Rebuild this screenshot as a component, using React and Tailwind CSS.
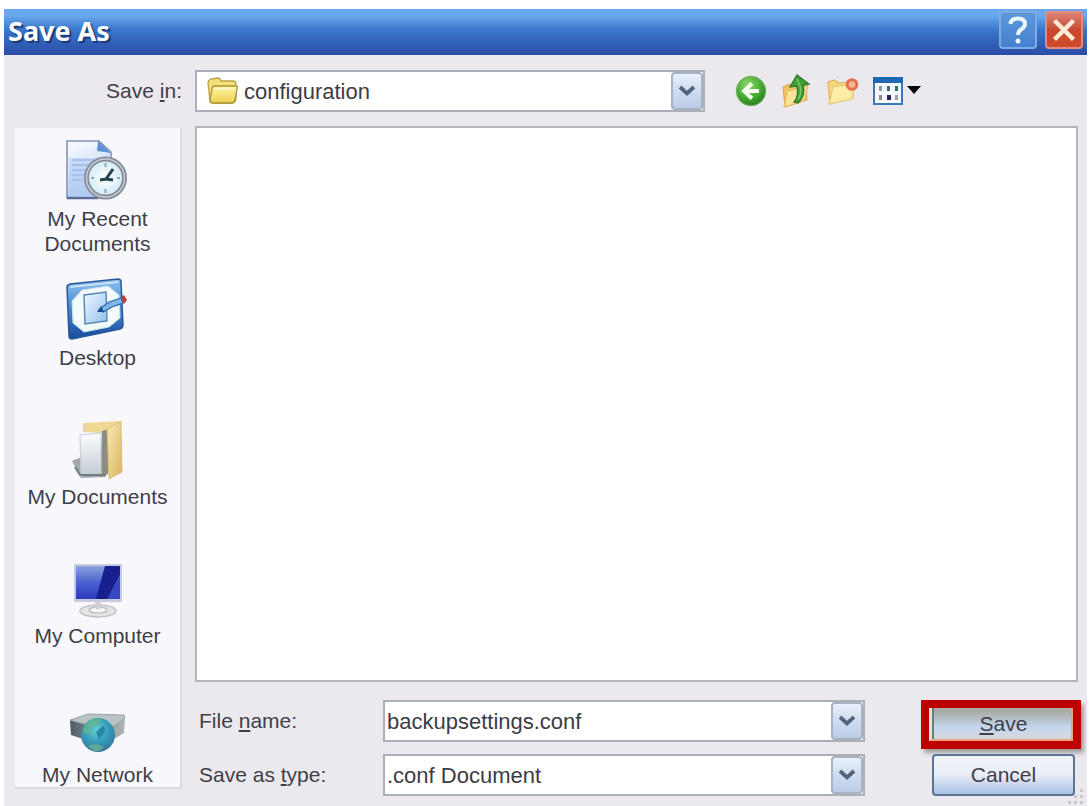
import React from "react";

function Chevron() {
  return (
    <svg viewBox="0 0 18 12" className="h-3 w-[18px]" aria-hidden="true">
      <path d="M2 2 L9 8.5 L16 2" fill="none" stroke="#55647c" strokeWidth="3.8" />
    </svg>
  );
}

const arrowBox =
  "flex w-8 items-center justify-center rounded-sm border-2 border-[#a9b2c0] bg-linear-to-b from-[#e9f0fa] via-[#cfdcf0] to-[#bccde8]";

function SelectField({ id, options, icon, className }) {
  return (
    <div className={"relative h-[42px] " + className}>
      <select
        id={id}
        className={
          "h-full w-full appearance-none border-2 border-[#adaeb8] bg-white text-[22px] text-[#3c3c44] outline-none " +
          (icon ? "pl-[47px]" : "pl-[2px]")
        }
      >
        {options.map((o) => (
          <option key={o}>{o}</option>
        ))}
      </select>
      {icon && <span className="pointer-events-none absolute top-[7px] left-3">{icon}</span>}
      <span className={"pointer-events-none absolute top-0.5 right-0.5 bottom-0.5 " + arrowBox}>
        <Chevron />
      </span>
    </div>
  );
}

function FolderIcon() {
  return (
    <svg viewBox="0 0 32 28" className="h-7 w-8" aria-hidden="true">
      <defs>
        <linearGradient id="fold" x1="0" y1="0" x2="0" y2="1">
          <stop offset="0" stopColor="#fff6a4" />
          <stop offset="1" stopColor="#ecd052" />
        </linearGradient>
      </defs>
      <path d="M3 24 L1 6 Q1 3 4 2 L11 1 Q13 1 14 4 L26 4 Q29 4 29 7 L29 22 Q28 26 25 26 L6 26 Q3 26 3 24Z" fill="#f3e07c" stroke="#b9a24a" strokeWidth="1.3" />
      <path d="M5 12 Q5 9 8 9 L29 9 Q31 9 30 12 L28 23 Q27 26 24 26 L6 26 Q3 26 3 22Z" fill="url(#fold)" stroke="#ae9436" strokeWidth="1.3" />
      <path d="M7 11.5 H28" stroke="#fffbd0" strokeWidth="1.6" />
    </svg>
  );
}

function BackIcon() {
  return (
    <svg viewBox="0 0 32 32" className="size-8" aria-hidden="true">
      <defs>
        <radialGradient id="green" cx=".4" cy=".3" r=".75">
          <stop offset="0" stopColor="#8fd96d" />
          <stop offset=".6" stopColor="#45a832" />
          <stop offset="1" stopColor="#287c1d" />
        </radialGradient>
      </defs>
      <circle cx="16" cy="16" r="14.7" fill="url(#green)" stroke="#6fae5c" strokeWidth="1" />
      <path d="M17 8.5 L9 16 L17 23.5 M10 16 H24" fill="none" stroke="#f6fff0" strokeWidth="3.8" />
    </svg>
  );
}

function UpIcon() {
  return (
    <svg viewBox="0 0 32 36" className="h-9 w-8" aria-hidden="true">
      <path d="M3 14 L9 11 L12 13 L26 9 L27 27 L5 34Z" fill="#f0c560" stroke="#d9a948" strokeWidth="1" />
      <path d="M7 18 L28 13 L24 28 L4 34Z" fill="#fbe29a" stroke="#e0b558" strokeWidth="1" />
      <path d="M14 29 Q19 24 17 13 L10 14 L17 2 L29 11 L23 12 Q26 23 18 30Z" fill="#3fa037" stroke="#2f7a2b" strokeWidth="1.3" />
      <path d="M17 6 L20 13 Q22 21 18 26" fill="none" stroke="#7cc768" strokeWidth="1.6" />
    </svg>
  );
}

function NewFolderIcon() {
  return (
    <svg viewBox="0 0 34 32" className="h-8 w-[34px]" aria-hidden="true">
      <path d="M3 7 L10 5 L13 8 L27 7 L28 22 L5 29Z" fill="#f5d67c" stroke="#dfb45a" strokeWidth="1.2" />
      <path d="M8 12 L30 9 L27 24 L4 29Z" fill="#fdeda6" stroke="#e8c973" strokeWidth="1.2" />
      <circle cx="27" cy="9.500" r="4.800" fill="#f3b795" stroke="#e5704e" strokeWidth="3" />
    </svg>
  );
}

function ViewsIcon() {
  return (
    <svg viewBox="0 0 50 30" className="h-[30px] w-[50px]" aria-hidden="true">
      <rect x="2" y="2" width="28" height="26" fill="#f7fafc" stroke="#3c78b4" strokeWidth="2" />
      <rect x="1" y="1" width="30" height="6" fill="#1f68b4" />
      <g fill="#4a6480">
        <rect x="7" y="10" width="3" height="5" fill="#8796a8" />
        <rect x="15" y="10" width="3" height="5" />
        <rect x="23" y="10" width="3" height="5" fill="#316f68" />
        <rect x="7" y="19" width="3" height="5" fill="#8b8690" />
        <rect x="15" y="19" width="4" height="5" fill="#33205a" />
        <rect x="23" y="19" width="3" height="5" fill="#9a9ca6" />
      </g>
      <path d="M35 10 H49 L42 18Z" fill="#050505" />
    </svg>
  );
}

function RecentIcon() {
  return (
    <svg viewBox="0 0 64 64" className="size-16" aria-hidden="true">
      <defs>
        <linearGradient id="page" x1="0" y1="0" x2=".3" y2="1">
          <stop offset="0" stopColor="#fdfdff" />
          <stop offset="1" stopColor="#b6cdf2" />
        </linearGradient>
        <radialGradient id="clock">
          <stop offset="0" stopColor="#ffffff" />
          <stop offset="1" stopColor="#cdebf3" />
        </radialGradient>
      </defs>
      <path d="M1 3 H33 L45 14 V60 H1Z" fill="url(#page)" stroke="#8095bd" strokeWidth="1.6" />
      <path d="M1 60 H32" stroke="#596b96" strokeWidth="2.5" />
      <path d="M32 3 L45 15 L31 13Z" fill="#5b8fd6" />
      <path d="M3 20 H38 V59 H3Z" fill="#a9c6f0" opacity=".45" />
      <path d="M6 22 H28 M6 27 H24 M6 32 H20 M6 37 H18 M6 42 H17" stroke="#9db9e6" strokeWidth="1.6" />
      <circle cx="39.500" cy="40" r="19" fill="url(#clock)" stroke="#858b98" strokeWidth="5" />
      <circle cx="39.500" cy="40" r="19" fill="none" stroke="#c7ccd4" strokeWidth="1.5" />
      <path d="M39.500 25 V29 M39.500 51 V55 M25 40 H28 M51 40 H54" stroke="#8fa9b6" strokeWidth="2" />
      <path d="M34 42 L40 41 L47 31 M40 41 L47 42" fill="none" stroke="#22434e" strokeWidth="3" />
    </svg>
  );
}

function DesktopIcon() {
  return (
    <svg viewBox="0 0 64 64" className="size-16" aria-hidden="true">
      <defs>
        <linearGradient id="desk" x1="0" y1="0" x2="0" y2="1">
          <stop offset="0" stopColor="#8dc0ee" />
          <stop offset=".5" stopColor="#4888d0" />
          <stop offset="1" stopColor="#174a99" />
        </linearGradient>
        <linearGradient id="note" x1="0" y1="0" x2="1" y2="1">
          <stop offset="0" stopColor="#f3f9ff" />
          <stop offset="1" stopColor="#8fc0ed" />
        </linearGradient>
      </defs>
      <path d="M1 10 Q1 8 4 7 L52 2 Q55 2 55 5 L57 48 Q57 51 54 52 L6 62 Q3 62 3 59Z" fill="url(#desk)" stroke="#28599f" strokeWidth="1.5" />
      <path d="M4 10 L52 5" stroke="#c6e1f8" strokeWidth="2" />
      <path d="M16 13 L42 9 L53 18 L54 41 L43 50 L18 55 L7 46 L6 24Z" fill="#f3fbfa" stroke="#c2dfef" strokeWidth="1" />
      <path d="M18 18 L40 15 L41 44 L19 47Z" fill="url(#note)" stroke="#5484b2" strokeWidth="1.4" />
      <path d="M35 31 L43 25 L55 21 L57 26 L46 30 L37 35Z" fill="#7eb6e7" stroke="#2f6aa8" strokeWidth="1.3" />
      <path d="M31 35 L35 29 L38 35Z" fill="#174d9c" />
      <path d="M55 20 L58 18 L61 23 L58 27Z" fill="#b9402e" />
    </svg>
  );
}

function DocumentsIcon() {
  return (
    <svg viewBox="0 0 64 64" className="size-16" aria-hidden="true">
      <defs>
        <linearGradient id="manila" x1="0" y1="0" x2="1" y2="1">
          <stop offset="0" stopColor="#fbe9b4" />
          <stop offset="1" stopColor="#d9b562" />
        </linearGradient>
        <linearGradient id="sheet" x1="0" y1="0" x2="0" y2="1">
          <stop offset="0" stopColor="#fbfdff" />
          <stop offset="1" stopColor="#c1cad2" />
        </linearGradient>
      </defs>
      <path d="M6 45 L18 40 L40 61 L15 62Z" fill="#9fa9ac" />
      <path d="M17 7 L53 5 L55 52 L37 58 L36 17 L17 16Z" fill="#f1d795" />
      <path d="M36 15 L34 61 L42 58 L43 13Z" fill="#8b8c85" />
      <path d="M41 13 L55 5 L56 56 L43 63Z" fill="url(#manila)" stroke="#d8b76c" strokeWidth=".8" />
      <path d="M14 19 L35 17 L35 58 L15 60Z" fill="url(#sheet)" stroke="#c5cdd5" strokeWidth="1" />
      <path d="M9 51 L14 59 L40 59" fill="none" stroke="#707b80" strokeWidth="2" />
    </svg>
  );
}

function ComputerIcon() {
  return (
    <svg viewBox="0 0 64 64" className="size-16" aria-hidden="true">
      <defs>
        <linearGradient id="screen" x1="0" y1="0" x2="0" y2="1">
          <stop offset="0" stopColor="#8ea3df" />
          <stop offset=".5" stopColor="#4a61cf" />
          <stop offset="1" stopColor="#2a39bb" />
        </linearGradient>
      </defs>
      <ellipse cx="32" cy="56" rx="18" ry="6" fill="#e4e4e7" stroke="#c3c3c8" strokeWidth="1.5" />
      <ellipse cx="32" cy="55" rx="9" ry="3" fill="#f5f5f6" stroke="#b8b8be" strokeWidth="1.2" />
      <path d="M29 46 H35 L34 54 H30Z" fill="#cfcfd4" />
      <rect x="8" y="9" width="48" height="38" rx="1.500" fill="#c6cbe0" />
      <rect x="10" y="11" width="44" height="33" fill="url(#screen)" />
      <path d="M39 11 H54 V20 L41 44 H30Z" fill="#171e8d" />
      <path d="M54 21 V44 H42Z" fill="#3547c5" />
    </svg>
  );
}

function NetworkIcon() {
  return (
    <svg viewBox="0 0 64 64" className="size-16" aria-hidden="true">
      <defs>
        <radialGradient id="globe" cx=".45" cy=".35" r=".65">
          <stop offset="0" stopColor="#63cfd3" />
          <stop offset=".6" stopColor="#3499b8" />
          <stop offset="1" stopColor="#37789a" />
        </radialGradient>
        <linearGradient id="device" x1="0" y1="0" x2="1" y2="0">
          <stop offset="0" stopColor="#505b64" />
          <stop offset=".5" stopColor="#879399" />
          <stop offset="1" stopColor="#aeb4b7" />
        </linearGradient>
      </defs>
      <path d="M4 26 L24 30 L48 31 L59 23 L58 39 L46 46 L20 46 L5 41Z" fill="url(#device)" />
      <path d="M4 26 L22 20 L58 21 L59 24 L48 32 L22 31Z" fill="#b9c3c5" stroke="#9ca6a8" strokeWidth="1" />
      <circle cx="32" cy="41" r="17" fill="url(#globe)" />
      <path d="M18 33 Q25 22 36 25 L32 31 L25 33 L24 40 L17 39Z" fill="#69b887" opacity=".7" />
      <path d="M34 34 L38 32 L39 38 L33 45 L30 38Z" fill="#1d6f9b" opacity=".7" />
      <path d="M22 52 Q29 48 38 53 Q34 58 28 57Z" fill="#72b894" opacity=".7" />
    </svg>
  );
}

const places = [
  { label: "My Recent Documents", icon: <RecentIcon /> },
  { label: "Desktop", icon: <DesktopIcon /> },
  { label: "My Documents", icon: <DocumentsIcon /> },
  { label: "My Computer", icon: <ComputerIcon /> },
  { label: "My Network", icon: <NetworkIcon /> },
];

const tools = [
  { label: "Back", icon: <BackIcon /> },
  { label: "Up one level", icon: <UpIcon /> },
  { label: "New folder", icon: <NewFolderIcon /> },
  { label: "Views", icon: <ViewsIcon /> },
];

function TitleBar() {
  return (
    <header className="flex h-[46px] items-start justify-between bg-linear-to-b from-[#69a8ec] from-15% via-[#3a77cb] via-45% to-[#2a4ca6] pt-0.5 pr-1 pl-1">
      <h1 className="font-['Noto_Sans',sans-serif] text-[27px] leading-10 font-bold text-white [text-shadow:2px_2px_1px_#1c3878]">
        Save As
      </h1>
      <div className="flex gap-2">
        <button aria-label="Help" className="flex size-[38px] items-center justify-center rounded-[4px] border-2 border-[#7eabe4] bg-linear-to-b from-[#5d98dd] to-[#4480d0]">
          <svg viewBox="0 0 24 30" className="h-[30px] w-6" aria-hidden="true">
            <path d="M4.500 9 Q5 3.500 12 3.500 Q19 3.500 19 9 Q19 12 15 14.500 Q12 16.500 12 20" fill="none" stroke="#eef6fb" strokeWidth="4" />
            <circle cx="12" cy="26" r="2.500" fill="#eef6fb" />
          </svg>
        </button>
        <button aria-label="Close" className="flex size-[38px] items-center justify-center rounded-[4px] border-2 border-[#e08a80] bg-linear-to-b from-[#dc8074] via-[#c94a2c] to-[#d0492a]">
          <svg viewBox="0 0 24 24" className="size-6" aria-hidden="true">
            <path d="M2.500 2.500 L21.500 21.500 M21.500 2.500 L2.500 21.500" stroke="#fbecd6" strokeWidth="4.500" />
          </svg>
        </button>
      </div>
    </header>
  );
}

function ResizeGrip() {
  return (
    <svg viewBox="0 0 18 18" className="absolute right-0.5 bottom-0 size-[18px]" aria-hidden="true">
      <g fill="#c9c7ce">
        <rect x="13" y="1" width="3" height="3" />
        <rect x="13" y="7" width="3" height="3" />
        <rect x="7" y="7" width="3" height="3" />
        <rect x="13" y="13" width="3" height="3" />
        <rect x="7" y="13" width="3" height="3" />
        <rect x="1" y="13" width="3" height="3" />
      </g>
    </svg>
  );
}

export default function App() {
  return (
    <div className="flex min-h-screen flex-col bg-white pt-[9px] pr-0.5 pl-1 font-['Liberation_Sans',Arial,sans-serif] text-[21px] text-[#3f3f47]">
      <TitleBar />
      <main className="relative flex flex-1 gap-[13px] bg-[#ebe9ed] pt-[15px] pr-[9px] pb-2.5 pl-[11px]">
        <div className="flex w-[167px] shrink-0 flex-col pb-[7px]">
          <label htmlFor="folder" className="flex h-[42px] items-center justify-end whitespace-pre">
            Save <u>i</u>n:
          </label>
          <nav aria-label="Places" className="mt-4 flex-1 border-r-2 border-b-2 border-[#dcdbe2] bg-[#f7f7fc] pt-2.5">
            <ul>
              {places.map((p) => (
                <li key={p.label} className="min-h-[139px] last:min-h-0">
                  <button className="flex w-full flex-col items-center gap-1 px-1 text-center leading-[25px]">
                    {p.icon}
                    <span>{p.label}</span>
                  </button>
                </li>
              ))}
            </ul>
          </nav>
        </div>

        <div className="flex min-w-0 flex-1 flex-col">
          <div className="flex items-center gap-[30px]">
            <SelectField id="folder" options={["configuration"]} icon={<FolderIcon />} className="w-[510px]" />
            <div className="flex items-center gap-[13px]">
              {tools.map((t) => (
                <button key={t.label} aria-label={t.label}>
                  {t.icon}
                </button>
              ))}
            </div>
          </div>

          <section aria-label="Files" className="mt-3.5 flex-1 border-2 border-[#b5b5bb] bg-white" />

          <form className="mt-[18px] grid grid-cols-[188px_1fr_143px] items-center gap-y-3 pr-[3px]" onSubmit={(e) => e.preventDefault()}>
            <label htmlFor="name" className="pl-1">
              File <u>n</u>ame:
            </label>
            <div className="mr-[67px] flex h-[42px] border-2 border-[#adaeb8] bg-white">
              <input
                id="name"
                defaultValue="backupsettings.conf"
                className="min-w-0 flex-1 bg-transparent pl-[2px] text-[22px] text-[#3c3c44] outline-none"
              />
              <button type="button" aria-label="Show names" className={arrowBox}>
                <Chevron />
              </button>
            </div>
            <div className="relative h-[42px] pt-1">
              <button className="h-10 w-full rounded-sm border-2 border-[#6f7a74] bg-linear-to-b from-[#a9aba6] from-15% via-[#c5d8f0] via-60% to-[#dcd6d4]">
                <u>S</u>ave
              </button>
              <span className="pointer-events-none absolute top-0 -right-1.5 -left-[11px] h-[49px] border-8 border-[#bd0000] shadow-[3px_4px_4px_#a0a0a0]">
                <span className="block h-full border-r-2 border-b-2 border-l-3 border-r-[#eba27c] border-b-[#eba27c] border-l-[#efe3e0]" />
              </span>
            </div>

            <label htmlFor="type" className="pl-1">
              Save as <u>t</u>ype:
            </label>
            <SelectField id="type" options={[".conf Document"]} className="mr-[67px]" />
            <button type="button" className="relative h-[42px] rounded-sm border-2 border-[#5b7595] bg-linear-to-b from-[#eff2f8] from-20% via-[#e8edf6] via-50% to-[#a9c1e4]">
              Cancel
            </button>
          </form>
        </div>
        <ResizeGrip />
      </main>
    </div>
  );
}
